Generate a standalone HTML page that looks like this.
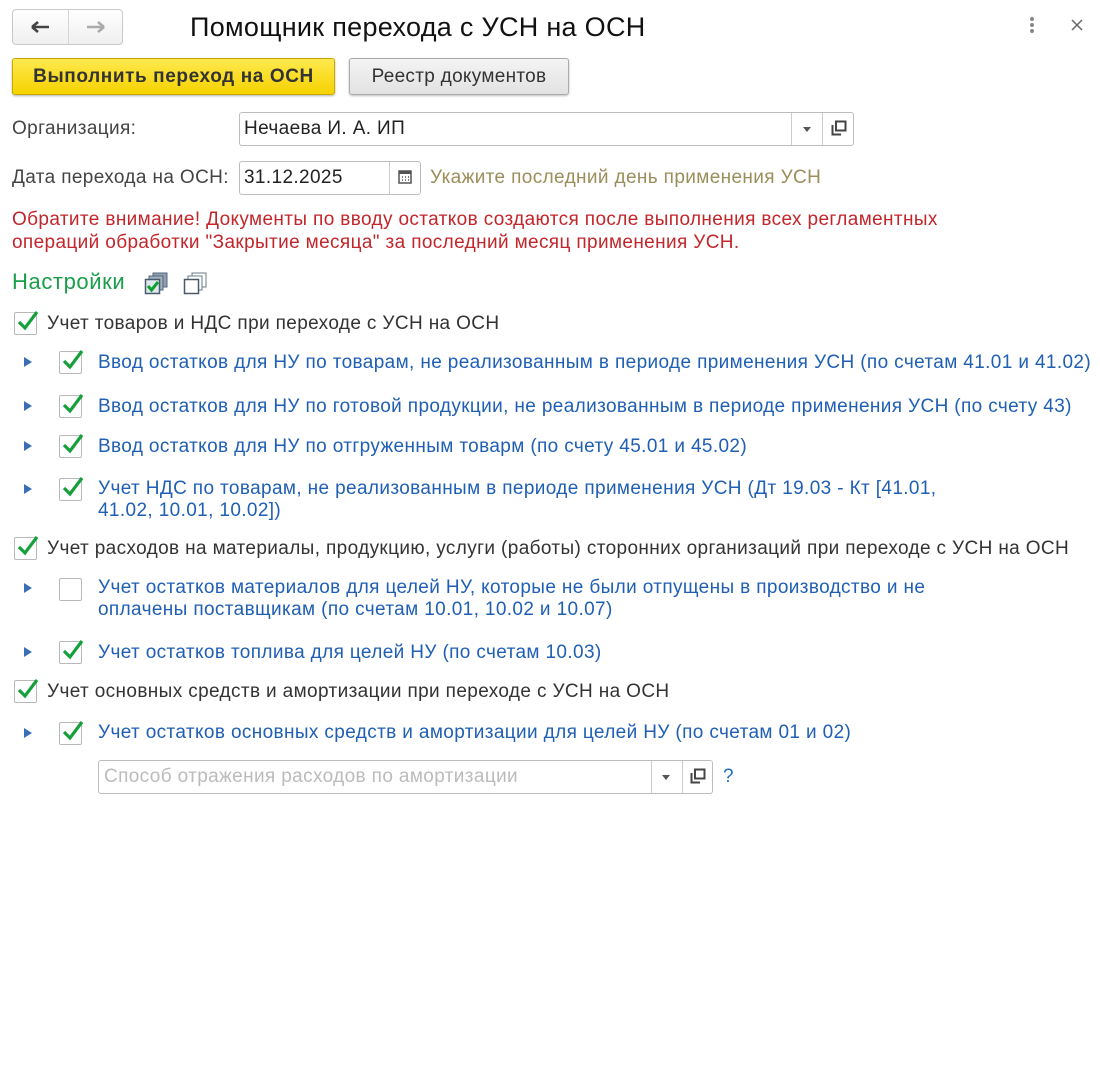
<!DOCTYPE html>
<html><head><meta charset="utf-8"><style>
*{margin:0;padding:0;box-sizing:border-box}
body{width:1100px;height:1085px;background:#fff;font-family:"Liberation Sans",Arial,sans-serif;position:relative;overflow:hidden;color:#333}
.a{position:absolute;white-space:nowrap}
.t{font-size:19px;line-height:22px;letter-spacing:0.37px}
.blue{color:#1f5fb4}
.cb{position:absolute;width:23px;height:23px;border:1px solid #b9b9b9;border-radius:2px;background:#fff}
.cb svg{position:absolute;left:1px;top:-5px}
.tri{position:absolute;width:0;height:0;border-left:8px solid #3a6fb8;border-top:5px solid transparent;border-bottom:5px solid transparent}
.fld{position:absolute;border:1px solid #bdbdbd;border-radius:3px;background:#fff}
</style></head><body>
<div class="fld" style="left:12px;top:9px;width:111px;height:36px;border-radius:4px;background:linear-gradient(#fff,#efefef);border-color:#c9c9c9"></div>
<div class="a" style="left:68px;top:10px;width:1px;height:34px;background:#d6d6d6"></div>
<svg class="a" style="left:30px;top:20px" width="22" height="14"><path d="M2 7H19M2 7L8 2M2 7L8 12" stroke="#444" stroke-width="2.6" fill="none"/></svg>
<svg class="a" style="left:84px;top:20px" width="22" height="14"><path d="M3 7H20M20 7L14 2M20 7L14 12" stroke="#aaa" stroke-width="2.6" fill="none"/></svg>
<div class="a" style="left:190px;top:10px;font-size:27px;line-height:34px;color:#111;letter-spacing:0.3px">Помощник перехода с УСН на ОСН</div>
<svg class="a" style="left:1028px;top:16px" width="8" height="18"><circle cx="4" cy="3" r="2" fill="#888"/><circle cx="4" cy="9" r="2" fill="#888"/><circle cx="4" cy="15" r="2" fill="#888"/></svg>
<svg class="a" style="left:1071px;top:19px" width="12" height="12"><path d="M1 1L11 11M11 1L1 11" stroke="#666" stroke-width="1.5"/></svg>
<div class="a" style="left:12px;top:58px;width:323px;height:37px;border:1px solid #c9a800;border-radius:3px;background:linear-gradient(#ffe94f,#f5d200);box-shadow:0 1px 2px rgba(0,0,0,.3);font-size:19px;letter-spacing:0.6px;font-weight:bold;color:#333;text-align:center;line-height:35px">Выполнить переход на ОСН</div>
<div class="a" style="left:349px;top:58px;width:220px;height:37px;border:1px solid #aaa;border-radius:3px;background:linear-gradient(#f4f4f4,#e2e2e2);box-shadow:0 1px 2px rgba(0,0,0,.25);font-size:19px;letter-spacing:0.3px;color:#333;text-align:center;line-height:35px">Реестр документов</div>
<div class="a t" style="left:12px;top:118px;color:#444">Организация:</div>
<div class="fld" style="left:239px;top:112px;width:615px;height:34px"></div>
<div class="a" style="left:791px;top:113px;width:1px;height:32px;background:#ccc"></div>
<div class="a" style="left:822px;top:113px;width:1px;height:32px;background:#ccc"></div>
<div class="a t" style="left:244px;top:118px;color:#222">Нечаева И. А. ИП</div>
<div class="a" style="left:803px;top:127px;border-top:5px solid #555;border-left:4px solid transparent;border-right:4px solid transparent"></div>
<svg class="a" style="left:831px;top:120px" width="16" height="16"><path d="M5 1.5H14.5V10.5H5Z" stroke="#444" stroke-width="2" fill="none"/><path d="M1.5 5V14.5H10" stroke="#444" stroke-width="2" fill="none"/></svg>
<div class="a t" style="left:12px;top:167px;color:#444">Дата перехода на ОСН:</div>
<div class="fld" style="left:239px;top:161px;width:182px;height:34px"></div>
<div class="a" style="left:389px;top:162px;width:1px;height:32px;background:#ccc"></div>
<div class="a t" style="left:244px;top:167px;color:#222">31.12.2025</div>
<svg class="a" style="left:398px;top:169px" width="14" height="15"><rect x="1" y="2" width="12" height="12" fill="none" stroke="#555" stroke-width="1.5"/><rect x="1" y="2" width="12" height="3" fill="#555"/><path d="M4 8h1M7 8h1M10 8h1M4 11h1M7 11h1M10 11h1" stroke="#555" stroke-width="1.5"/></svg>
<div class="a t" style="left:430px;top:167px;color:#9b8e5a">Укажите последний день применения УСН</div>
<div class="a t" style="left:12px;top:209px;color:#c2262b">Обратите внимание! Документы по вводу остатков создаются после выполнения всех регламентных</div>
<div class="a t" style="left:12px;top:232px;color:#c2262b">операций обработки "Закрытие месяца" за последний месяц применения УСН.</div>
<div class="a" style="left:12px;top:268px;font-size:22px;letter-spacing:0.6px;line-height:28px;color:#1a9e4a">Настройки</div>
<svg class="a" style="left:144px;top:272px" width="26" height="24"><rect x="9" y="1" width="14" height="14" fill="#8fa0b0" stroke="#556677"/><rect x="5" y="4" width="14" height="14" fill="#9fb0c0" stroke="#556677"/><rect x="1.5" y="7.5" width="14" height="14" fill="#dfe7ee" stroke="#4a5a6a" stroke-width="1.5"/><path d="M4 14L7.5 18L14 10" stroke="#10a030" stroke-width="3" fill="none"/></svg>
<svg class="a" style="left:183px;top:272px" width="26" height="24"><rect x="9" y="1" width="14" height="14" fill="#fff" stroke="#6a7a8a"/><rect x="5" y="4" width="14" height="14" fill="#fff" stroke="#6a7a8a"/><rect x="1.5" y="7.5" width="14" height="14" fill="#fff" stroke="#4a5a6a" stroke-width="1.5"/></svg>

<div class="cb" style="left:14px;top:312px"><svg width="24" height="26"><path d="M3 14L9 20L21 4" stroke="#16a03c" stroke-width="3.2" fill="none"/></svg></div>
<div class="a t" style="left:47px;top:313px">Учет товаров и НДС при переходе с УСН на ОСН</div>

<div class="tri" style="left:24px;top:357px"></div>
<div class="cb" style="left:59px;top:351px"><svg width="24" height="26"><path d="M3 14L9 20L21 4" stroke="#16a03c" stroke-width="3.2" fill="none"/></svg></div>
<div class="a t blue" style="left:98px;top:352px">Ввод остатков для НУ по товарам, не реализованным в периоде применения УСН (по счетам 41.01 и 41.02)</div>

<div class="tri" style="left:24px;top:401px"></div>
<div class="cb" style="left:59px;top:395px"><svg width="24" height="26"><path d="M3 14L9 20L21 4" stroke="#16a03c" stroke-width="3.2" fill="none"/></svg></div>
<div class="a t blue" style="left:98px;top:396px">Ввод остатков для НУ по готовой продукции, не реализованным в периоде применения УСН (по счету 43)</div>

<div class="tri" style="left:24px;top:441px"></div>
<div class="cb" style="left:59px;top:435px"><svg width="24" height="26"><path d="M3 14L9 20L21 4" stroke="#16a03c" stroke-width="3.2" fill="none"/></svg></div>
<div class="a t blue" style="left:98px;top:436px">Ввод остатков для НУ по отгруженным товарм (по счету 45.01 и 45.02)</div>

<div class="tri" style="left:24px;top:484px"></div>
<div class="cb" style="left:59px;top:478px"><svg width="24" height="26"><path d="M3 14L9 20L21 4" stroke="#16a03c" stroke-width="3.2" fill="none"/></svg></div>
<div class="a t blue" style="left:98px;top:478px">Учет НДС по товарам, не реализованным в периоде применения УСН (Дт 19.03 - Кт [41.01,</div>
<div class="a t blue" style="left:98px;top:500px">41.02, 10.01, 10.02])</div>

<div class="cb" style="left:14px;top:537px"><svg width="24" height="26"><path d="M3 14L9 20L21 4" stroke="#16a03c" stroke-width="3.2" fill="none"/></svg></div>
<div class="a t" style="left:47px;top:538px">Учет расходов на материалы, продукцию, услуги (работы) сторонних организаций при переходе с УСН на ОСН</div>

<div class="tri" style="left:24px;top:583px"></div>
<div class="cb" style="left:59px;top:578px"></div>
<div class="a t blue" style="left:98px;top:577px">Учет остатков материалов для целей НУ, которые не были отпущены в производство и не</div>
<div class="a t blue" style="left:98px;top:599px">оплачены поставщикам (по счетам 10.01, 10.02 и 10.07)</div>

<div class="tri" style="left:24px;top:647px"></div>
<div class="cb" style="left:59px;top:641px"><svg width="24" height="26"><path d="M3 14L9 20L21 4" stroke="#16a03c" stroke-width="3.2" fill="none"/></svg></div>
<div class="a t blue" style="left:98px;top:642px">Учет остатков топлива для целей НУ (по счетам 10.03)</div>

<div class="cb" style="left:14px;top:680px"><svg width="24" height="26"><path d="M3 14L9 20L21 4" stroke="#16a03c" stroke-width="3.2" fill="none"/></svg></div>
<div class="a t" style="left:47px;top:681px">Учет основных средств и амортизации при переходе с УСН на ОСН</div>

<div class="tri" style="left:24px;top:728px"></div>
<div class="cb" style="left:59px;top:722px"><svg width="24" height="26"><path d="M3 14L9 20L21 4" stroke="#16a03c" stroke-width="3.2" fill="none"/></svg></div>
<div class="a t blue" style="left:98px;top:722px">Учет остатков основных средств и амортизации для целей НУ (по счетам 01 и 02)</div>

<div class="fld" style="left:98px;top:760px;width:615px;height:34px"></div>
<div class="a" style="left:651px;top:761px;width:1px;height:32px;background:#ccc"></div>
<div class="a" style="left:682px;top:761px;width:1px;height:32px;background:#ccc"></div>
<div class="a t" style="left:104px;top:766px;color:#bbb">Способ отражения расходов по амортизации</div>
<div class="a" style="left:662px;top:775px;border-top:5px solid #555;border-left:4px solid transparent;border-right:4px solid transparent"></div>
<svg class="a" style="left:690px;top:768px" width="16" height="16"><path d="M5 1.5H14.5V10.5H5Z" stroke="#444" stroke-width="2" fill="none"/><path d="M1.5 5V14.5H10" stroke="#444" stroke-width="2" fill="none"/></svg>
<div class="a t" style="left:723px;top:766px;color:#1f6fc0">?</div>
</body></html>
